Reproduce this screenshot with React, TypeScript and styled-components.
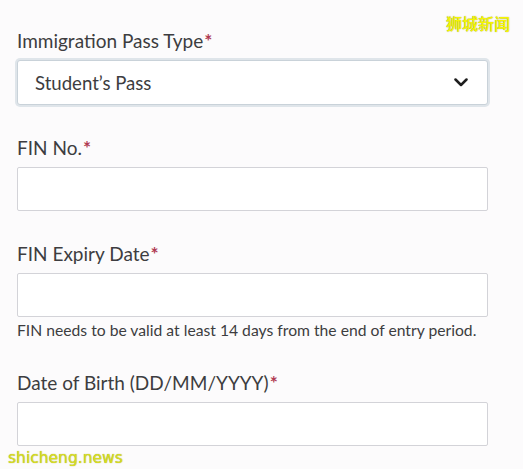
import styled, { createGlobalStyle } from "styled-components";

const GlobalStyle = createGlobalStyle`
	html, body {
		margin: 0;
		background-color: #fcfbfc;
	}
	body {
		font-family: Lato, "Open Sans", sans-serif;
		color: #3d3d40;
	}
`;

const Page = styled.div`
	position: relative;
	width: 523px;
	height: 469px;
	overflow: hidden;
`;

const Form = styled.form`
	display: flex;
	flex-direction: column;
	gap: 31px;
	width: 471px;
	padding: 29px 0 0 17px;
`;

const Field = styled.div`
	display: flex;
	flex-direction: column;
`;

const Label = styled.label`
	font-size: 19px;
	line-height: 23px;
	margin-bottom: 8px;
	color: #3d3d40;
`;

const Required = styled.span`
	color: #b03a52;
	font-size: 19px;
	font-weight: 700;
	margin-left: 1px;
`;

const SelectBox = styled.div`
	box-sizing: border-box;
	height: 45px;
	display: flex;
	align-items: center;
	justify-content: space-between;
	padding: 0 19px 0 17px;
	background-color: #fff;
	border: 1px solid #c9d2d9;
	border-radius: 3px;
	box-shadow: 0 0 0 2px #dfe5ea;
	font-size: 18.6px;
	color: #3d3d40;
`;

const Input = styled.input`
	box-sizing: border-box;
	height: 44px;
	width: 100%;
	border: 1px solid #d3d3d8;
	border-radius: 2px;
	background-color: #fff;
	font-family: inherit;
	font-size: 16px;
	padding: 0 12px;
	outline: none;
`;

const Hint = styled.p`
	margin: 4px 0 0;
	font-size: 15.7px;
	line-height: 19px;
	color: #3d3d40;
	white-space: nowrap;
`;

const Watermark = styled.span<{ $corner: "top" | "bottom" }>`
	position: absolute;
	${(p) =>
		p.$corner === "top"
			? `top: 11px; right: 13px; font-size: 16px; color: #f6f600;
			   font-family: "Noto Sans CJK SC", sans-serif; font-weight: 500;
			   text-shadow: 0 0 1px #8a8a20;`
			: `bottom: 2px; left: 8px; font-size: 15.5px; color: #d8dc20;
			   font-family: "DejaVu Sans", sans-serif; text-shadow: 0 0 1px #9aa020;`}
`;

function Chevron() {
	return (
		<svg width="14" height="9" viewBox="0 0 14 9" fill="none">
			<path d="M1.5 1.5 L7 7 L12.5 1.5" stroke="#1e1e1e" strokeWidth="2.5" strokeLinecap="round" strokeLinejoin="round" />
		</svg>
	);
}

export default function App() {
	return (
		<Page>
			<GlobalStyle />
			<Form>
				<Field>
					<Label>
						Immigration Pass Type<Required>*</Required>
					</Label>
					<SelectBox>
						<span>Student’s Pass</span>
						<Chevron />
					</SelectBox>
				</Field>
				<Field>
					<Label>
						FIN No.<Required>*</Required>
					</Label>
					<Input aria-label="FIN No." />
				</Field>
				<Field>
					<Label>
						FIN Expiry Date<Required>*</Required>
					</Label>
					<Input aria-label="FIN Expiry Date" />
					<Hint>FIN needs to be valid at least 14 days from the end of entry period.</Hint>
				</Field>
				<Field>
					<Label>
						Date of Birth (DD/MM/YYYY)<Required>*</Required>
					</Label>
					<Input aria-label="Date of Birth" />
				</Field>
			</Form>
			<Watermark $corner="top">狮城新闻</Watermark>
			<Watermark $corner="bottom">shicheng.news</Watermark>
		</Page>
	);
}
